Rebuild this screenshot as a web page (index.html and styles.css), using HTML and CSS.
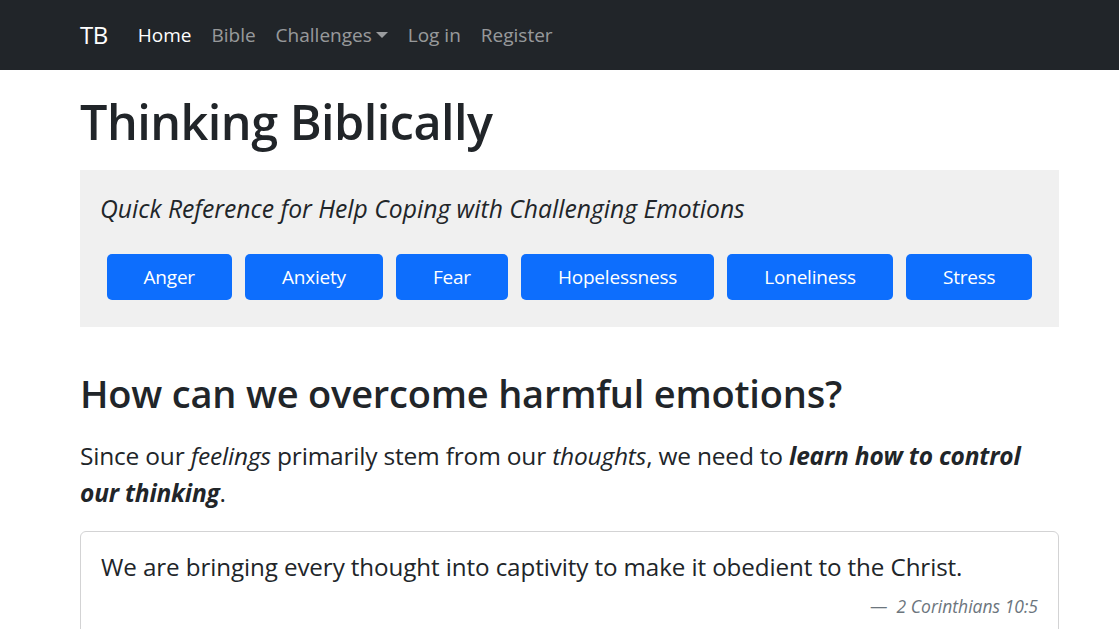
FILE: index.html
```html
<!DOCTYPE html>
<html lang="en">
<head>
<meta charset="utf-8">
<title>Thinking Biblically</title>
<link rel="stylesheet" href="styles.css">
</head>
<body>
<nav class="navbar">
  <div class="nav-inner">
    <a class="brand" href="#">TB</a>
    <ul class="nav-links">
      <li><a class="nav-link active" href="#">Home</a></li>
      <li><a class="nav-link" href="#">Bible</a></li>
      <li><a class="nav-link dropdown" href="#">Challenges<span class="caret"></span></a></li>
      <li><a class="nav-link" href="#">Log in</a></li>
      <li><a class="nav-link" href="#">Register</a></li>
    </ul>
  </div>
</nav>
<main class="container">
  <h1 class="title">Thinking Biblically</h1>
  <section class="jumbo">
    <p class="jumbo-lead">Quick Reference for Help Coping with Challenging Emotions</p>
    <div class="btn-row">
      <a class="btn" href="#">Anger</a>
      <a class="btn" href="#">Anxiety</a>
      <a class="btn" href="#">Fear</a>
      <a class="btn" href="#">Hopelessness</a>
      <a class="btn" href="#">Loneliness</a>
      <a class="btn" href="#">Stress</a>
    </div>
  </section>
  <h2 class="section-title">How can we overcome harmful emotions?</h2>
  <p class="lead">Since our <em>feelings</em> primarily stem from our <em>thoughts</em>, we need to <strong><em>learn how to control our thinking</em></strong>.</p>
  <figure class="card">
    <blockquote class="quote">We are bringing every thought into captivity to make it obedient to the Christ.</blockquote>
    <figcaption class="quote-footer">2 Corinthians 10:5</figcaption>
  </figure>
</main>
</body>
</html>
```
FILE: styles.css
```css
* { box-sizing: border-box; }
html, body { margin: 0; padding: 0; }
body {
  font-family: "Open Sans", "Noto Sans", sans-serif;
  font-size: 20px;
  line-height: 1.5;
  color: #212529;
  background: #fff;
  overflow: hidden;
}
a { text-decoration: none; }

.navbar {
  background: #212529;
  height: 70px;
}
.nav-inner {
  display: flex;
  align-items: center;
  height: 70px;
  padding-left: 80px;
}
.brand {
  color: #fff;
  font-size: 24px;
  margin-right: 20px;
  line-height: 1;
  letter-spacing: -0.5px;
}
.nav-links {
  display: flex;
  list-style: none;
  margin: 0;
  padding: 0;
}
.nav-link {
  display: block;
  padding: 10px 10px;
  font-size: 19px;
  color: rgba(255, 255, 255, 0.55);
}
.nav-link.active { color: #fff; }
.caret {
  display: inline-block;
  margin-left: 4px;
  vertical-align: 4px;
  border-top: 6px solid;
  border-left: 6px solid transparent;
  border-right: 6px solid transparent;
}

.container {
  width: 979px;
  margin-left: 80px;
}
.title {
  font-size: 48.5px;
  font-weight: 600;
  line-height: 1.2;
  letter-spacing: -0.5px;
  margin: 22px 0 20px;
}
.jumbo {
  background: #f0f0f0;
  padding: 20px 20px 27px;
}
.jumbo-lead {
  font-size: 24.7px;
  font-style: italic;
  font-weight: 400;
  margin: 0 0 27px;
}
.btn-row {
  display: flex;
  justify-content: center;
  gap: 13px;
}
.btn {
  display: block;
  background: #0d6efd;
  color: #fff;
  padding: 8px 37px;
  border-radius: 5px;
  font-size: 19px;
  line-height: 30px;
  letter-spacing: -0.2px;
}
.section-title {
  font-size: 38px;
  font-weight: 600;
  line-height: 1.2;
  letter-spacing: -0.2px;
  margin: 44px 0 20px;
}
.lead {
  font-size: 24.5px;
  font-weight: 400;
  line-height: 37px;
  letter-spacing: -0.2px;
  margin: 0 0 20px;
}
.lead strong { font-weight: 700; }
.card {
  margin: 0;
  border: 1px solid #d3d3d4;
  border-radius: 6px;
  padding: 17px 20px 20px;
}
.quote {
  margin: 0 0 8px;
  font-size: 24.2px;
  line-height: 1.5;
  letter-spacing: -0.1px;
}
.quote-footer {
  text-align: right;
  font-size: 17.5px;
  font-style: italic;
  color: #6c757d;
}
.quote-footer::before {
  content: "\2014\00A0\00A0";
  font-style: normal;
}
```
